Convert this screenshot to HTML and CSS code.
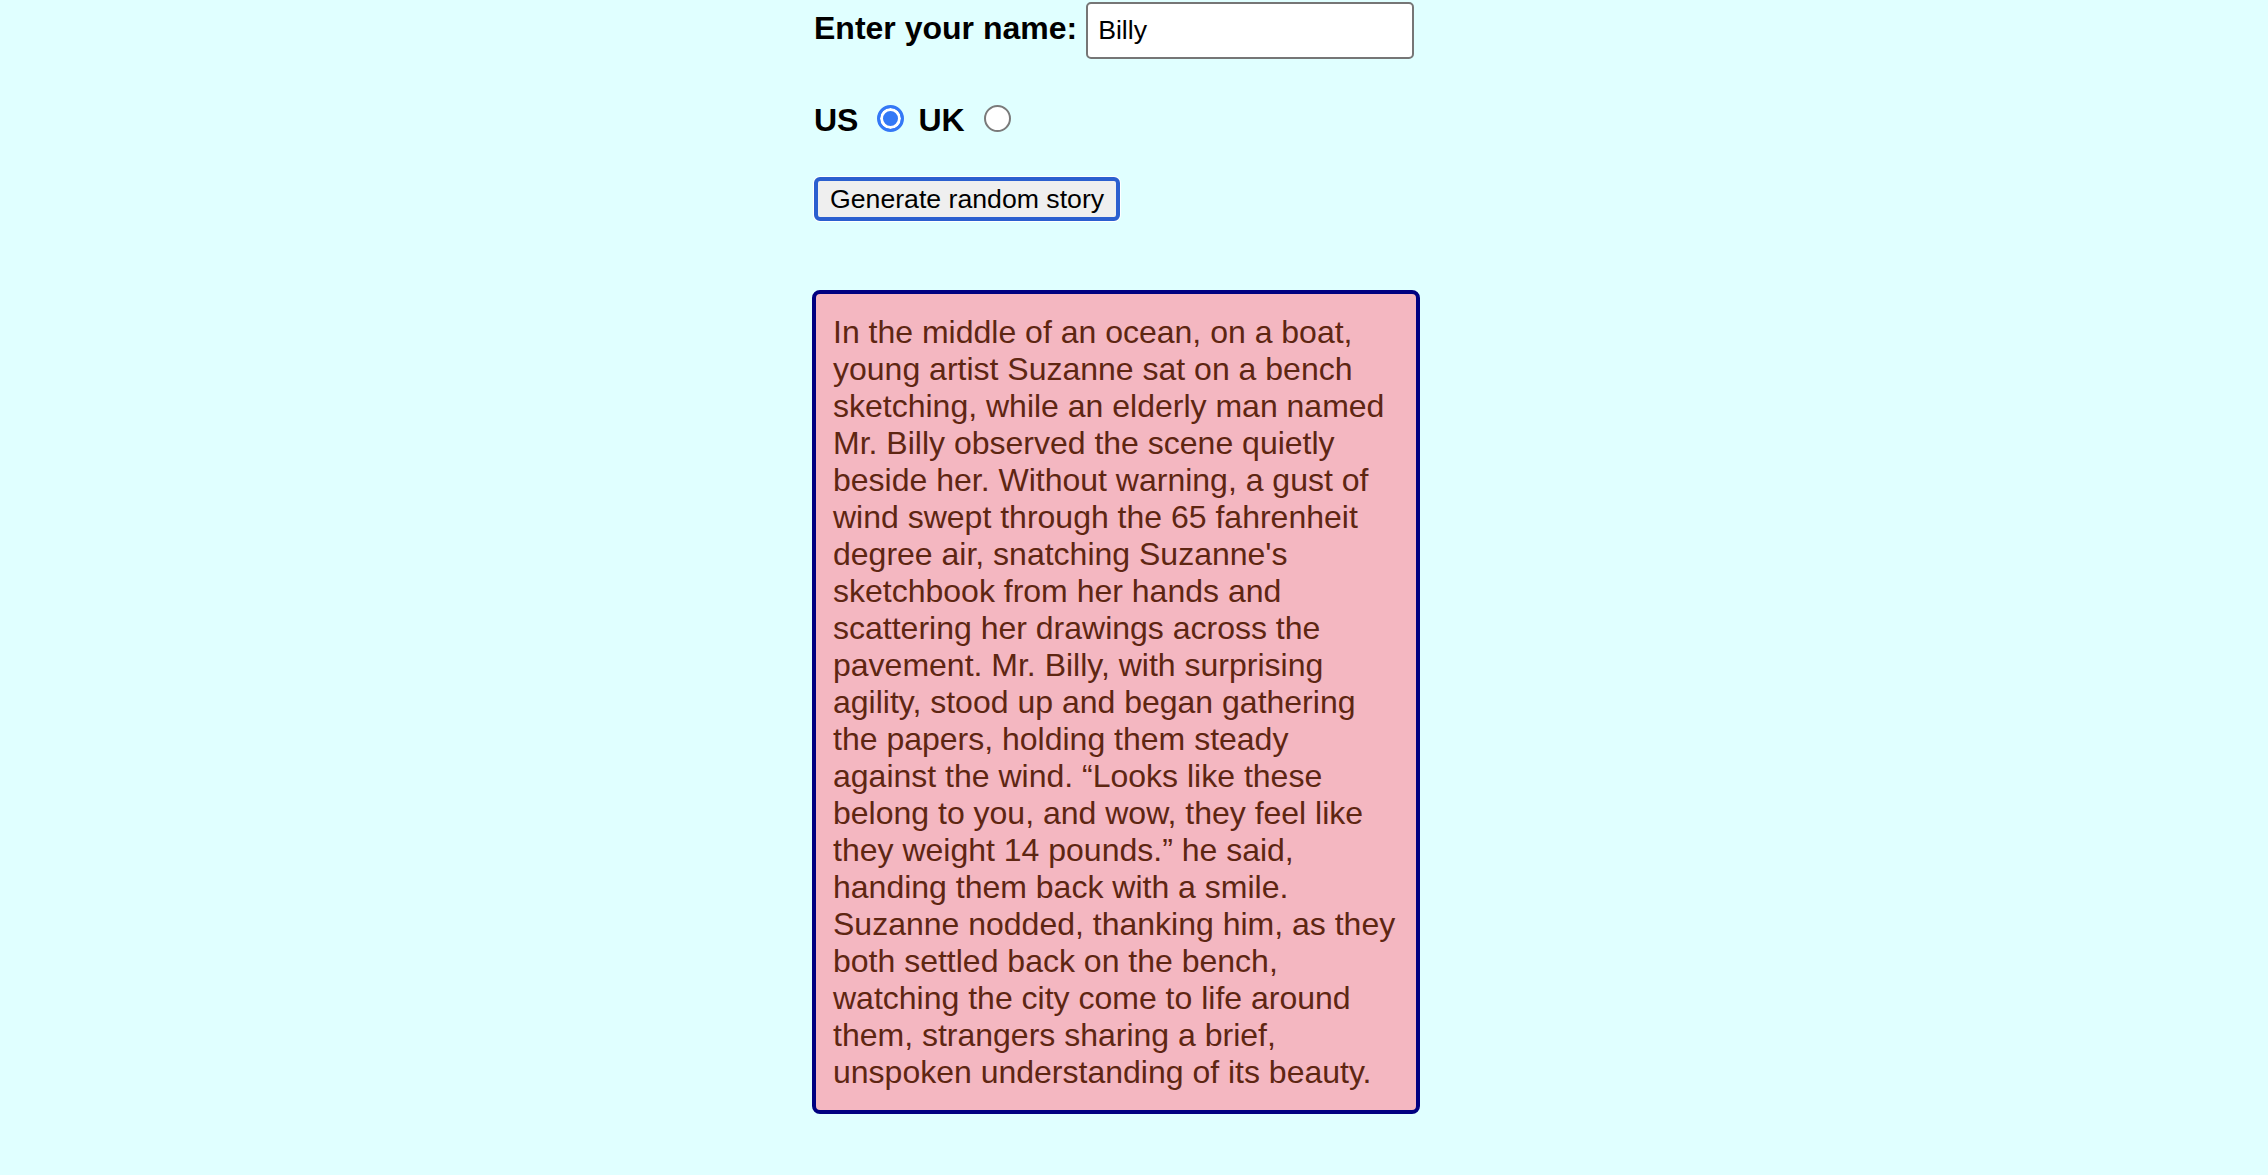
FILE: index.html
```html
<!DOCTYPE html>
<html lang="en">
<head>
<meta charset="utf-8">
<title>Silly story generator</title>
<link rel="stylesheet" href="styles.css">
</head>
<body>
<main class="page">
  <div class="row name-row">
    <label class="field-label" for="customname">Enter your name:</label>
    <input class="name-input" id="customname" type="text" value="Billy">
  </div>
  <div class="row choice-row">
    <label class="field-label" for="us">US</label>
    <input class="radio" id="us" type="radio" name="ukus" value="us" checked>
    <label class="field-label" for="uk">UK</label>
    <input class="radio" id="uk" type="radio" name="ukus" value="uk">
  </div>
  <div class="row button-row">
    <button class="randomize" type="button">Generate random story</button>
  </div>
  <p class="story">In the middle of an ocean, on a boat, young artist Suzanne sat on a bench sketching, while an elderly man named Mr. Billy observed the scene quietly beside her. Without warning, a gust of wind swept through the 65 fahrenheit degree air, snatching Suzanne's sketchbook from her hands and scattering her drawings across the pavement. Mr. Billy, with surprising agility, stood up and began gathering the papers, holding them steady against the wind. “Looks like these belong to you, and wow, they feel like they weight 14 pounds.” he said, handing them back with a smile. Suzanne nodded, thanking him, as they both settled back on the bench, watching the city come to life around them, strangers sharing a brief, unspoken understanding of its beauty.</p>
</main>
</body>
</html>
```

FILE: styles.css
```css
html, body {
  margin: 0;
  padding: 0;
}

body {
  background: #e0ffff;
  font-family: "Liberation Sans", Arial, Helvetica, sans-serif;
  font-size: 32px;
  color: #000;
}

.page {
  width: 608px;
  margin-left: calc(50% - 320px);
  padding-top: 2px;
}

.row {
  display: flex;
}

.field-label {
  font-weight: bold;
  font-size: 32px;
  line-height: normal;
}

.name-row {
  align-items: baseline;
}

.name-input {
  box-sizing: border-box;
  width: 328px;
  height: 57px;
  margin: 0 0 0 9px;
  padding: 0 10px;
  border: 2px solid #767676;
  border-radius: 5px;
  background: #fff;
  font-family: "Liberation Sans", Arial, Helvetica, sans-serif;
  font-size: 26.67px;
  color: #000;
  outline: none;
}

.choice-row {
  margin-top: 43px;
  align-items: flex-end;
}

.radio {
  appearance: none;
  -webkit-appearance: none;
  box-sizing: border-box;
  width: 27px;
  height: 27px;
  margin: 0 14px 7px 19px;
  border: 2px solid #7a7a7a;
  border-radius: 50%;
  background: #fff;
  flex: none;
}

.radio:checked {
  border: 3px solid #3478f6;
  background: #3478f6;
  box-shadow: inset 0 0 0 3px #fff;
}

.button-row {
  margin-top: 38px;
}

.randomize {
  box-sizing: border-box;
  height: 44px;
  padding: 0 12px;
  border: 4px solid #2b5fcf;
  border-radius: 6px;
  box-shadow: 0 0 0 1px #fff;
  background: #efefef;
  font-family: "Liberation Sans", Arial, Helvetica, sans-serif;
  font-size: 26.67px;
  color: #000;
  line-height: normal;
}

.story {
  box-sizing: border-box;
  width: 608px;
  margin: 69px 0 32px -2px;
  padding: 20px 18px 19px 17px;
  border: 4px solid #000080;
  border-radius: 8px;
  background: #f4b7c1;
  color: #5e2612;
  font-size: 32px;
  line-height: normal;
}
```
